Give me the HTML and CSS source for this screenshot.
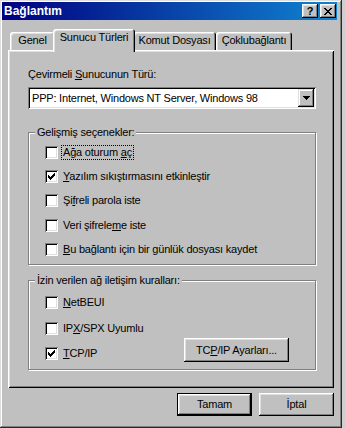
FILE: index.html
```html
<!DOCTYPE html>
<html lang="tr">
<head>
<meta charset="utf-8">
<title>Bağlantım</title>
<link rel="stylesheet" href="styles.css">
</head>
<body>
<div class="window">
  <div class="titlebar">
    <span class="title">Bağlantım</span>
    <div class="title-buttons">
      <span class="tbtn help">?</span>
      <span class="tbtn close"><svg width="8" height="7" viewBox="0 0 8 7" shape-rendering="crispEdges"><path d="M0 0h2v1H0zM6 0h2v1H6zM1 1h2v1H1zM5 1h2v1H5zM2 2h4v1H2zM3 3h2v1H3zM2 4h4v1H2zM1 5h2v1H1zM5 5h2v1H5zM0 6h2v1H0zM6 6h2v1H6z" fill="#000"/></svg></span>
    </div>
  </div>
  <div class="dialog-body">
    <div class="tabs">
      <div class="tab tab-genel">Genel</div>
      <div class="tab tab-sunucu active">Sunucu Türleri</div>
      <div class="tab tab-komut">Komut Dosyası</div>
      <div class="tab tab-coklu">Çoklubağlantı</div>
    </div>
    <div class="panel">
      <div class="field-label">Çevirmeli <u>S</u>unucunun Türü:</div>
      <div class="combo">
        <span class="combo-text">PPP: Internet, Windows NT Server, Windows 98</span>
        <span class="combo-btn"><svg width="7" height="4" viewBox="0 0 7 4" shape-rendering="crispEdges"><path d="M0 0h7v1H0zM1 1h5v1H1zM2 2h3v1H2zM3 3h1v1H3z" fill="#000"/></svg></span>
      </div>

      <div class="group group-adv">
        <div class="legend">Gelişmiş seçenekler:</div>
        <div class="rows">
          <div class="row"><span class="cb"></span><span class="cb-label focus">Ağa oturum <u>a</u>ç</span></div>
          <div class="row"><span class="cb"><svg width="7" height="7" viewBox="0 0 7 7" shape-rendering="crispEdges"><path d="M6 0h1v1H6zM5 1h2v1H5zM0 2h1v1H0zM4 2h3v1H4zM0 3h2v1H0zM3 3h3v1H3zM0 4h5v1H0zM1 5h3v1H1zM2 6h1v1H2z" fill="#000"/></svg></span><span class="cb-label"><u>Y</u>azılım sıkıştırmasını etkinleştir</span></div>
          <div class="row"><span class="cb"></span><span class="cb-label">Şi<u>f</u>reli parola iste</span></div>
          <div class="row"><span class="cb"></span><span class="cb-label">Veri şifrele<u>m</u>e iste</span></div>
          <div class="row"><span class="cb"></span><span class="cb-label"><u>B</u>u bağlantı için bir günlük dosyası kaydet</span></div>
        </div>
      </div>

      <div class="group group-proto">
        <div class="legend">İzin verilen ağ iletişim kuralları:</div>
        <div class="rows">
          <div class="row row-proto"><span class="cb"></span><span class="cb-label"><u>N</u>etBEUI</span></div>
          <div class="row row-proto"><span class="cb"></span><span class="cb-label">IP<u>X</u>/SPX Uyumlu</span></div>
          <div class="row row-proto"><span class="cb"><svg width="7" height="7" viewBox="0 0 7 7" shape-rendering="crispEdges"><path d="M6 0h1v1H6zM5 1h2v1H5zM0 2h1v1H0zM4 2h3v1H4zM0 3h2v1H0zM3 3h3v1H3zM0 4h5v1H0zM1 5h3v1H1zM2 6h1v1H2z" fill="#000"/></svg></span><span class="cb-label"><u>T</u>CP/IP</span><span class="btn btn-tcp">TC<u>P</u>/IP Ayarları...</span></div>
        </div>
      </div>
    </div>
    <div class="footer">
      <span class="btn btn-default">Tamam</span>
      <span class="btn">İptal</span>
    </div>
  </div>
</div>
</body>
</html>
```

FILE: styles.css
```css
* { box-sizing: border-box; }
html, body { margin: 0; padding: 0; }
body {
  width: 345px;
  height: 428px;
  overflow: hidden;
  background: #cfcfcf;
  font-family: "Liberation Sans", Arial, sans-serif;
  font-size: 11px;
  letter-spacing: -0.2px;
  color: #000;
}
u { text-decoration: underline; text-underline-offset: 1px; }

.window {
  width: 342px;
  height: 428px;
  background: #c0c0c0;
  padding: 2px 5px 3px 2px;
  box-shadow: inset -1px -1px #1c2f2a, inset 1px 1px #dfdfdf, inset -2px -2px #808080, inset 2px 2px #fff;
  display: flex;
  flex-direction: column;
}

.titlebar {
  height: 18px;
  background: linear-gradient(90deg, #000080, #1084d0);
  display: flex;
  align-items: center;
  justify-content: space-between;
  padding: 0 1px 0 2px;
}
.title {
  color: #fff;
  font-weight: bold;
  font-size: 12px;
  letter-spacing: 0;
  line-height: 14px;
}
.title-buttons { display: flex; gap: 2px; }
.tbtn {
  width: 16px;
  height: 14px;
  background: #c0c0c0;
  box-shadow: inset -1px -1px #000, inset 1px 1px #fff, inset -2px -2px #808080, inset 2px 2px #dfdfdf;
  display: flex;
  align-items: center;
  justify-content: center;
  font-weight: bold;
  font-size: 11px;
  letter-spacing: 0;
  line-height: 12px;
}

.dialog-body {
  padding: 9px 3px 0 6px;
  display: flex;
  flex-direction: column;
}

.tabs {
  height: 21px;
  display: flex;
  align-items: flex-end;
  padding-left: 2px;
}
.tab {
  height: 18px;
  background: #c0c0c0;
  border-radius: 3px 3px 0 0;
  box-shadow: inset 1px 1px #fff, inset -1px 0 #000, inset -2px 0 #808080, inset 2px 2px #dfdfdf;
  text-align: center;
  line-height: 15px;
  padding-top: 1px;
  white-space: nowrap;
}
.tab-genel { width: 45px; }
.tab-sunucu { width: 78px; }
.tab-komut { width: 83px; }
.tab-coklu { width: 76px; }
.tab.active {
  position: relative;
  z-index: 1;
  height: 23px;
  width: 82px;
  margin: 0 -2px -2px;
  padding-top: 1px;
  box-shadow: inset 1px 1px #fff, inset -1px 0 #000, inset -2px 0 #808080, inset 2px 2px #dfdfdf, inset 0 -3px #c0c0c0;
}

.panel {
  height: 338px;
  background: #c0c0c0;
  box-shadow: inset 1px 1px #fff, inset -1px -1px #000, inset 2px 2px #dfdfdf, inset -2px -2px #808080;
  padding: 17px 18px 0 20px;
  display: flex;
  flex-direction: column;
}

.field-label {
  line-height: 15px;
  height: 15px;
  white-space: nowrap;
}

.combo {
  margin-top: 5px;
  height: 22px;
  background: #fff;
  box-shadow: inset 1px 1px #808080, inset -1px -1px #fff, inset 2px 2px #000, inset -2px -2px #dfdfdf;
  padding: 2px;
  display: flex;
  align-items: center;
}
.combo-text {
  flex: 1;
  padding-left: 2px;
  line-height: 15px;
  white-space: nowrap;
}
.combo-btn {
  width: 16px;
  height: 18px;
  background: #c0c0c0;
  box-shadow: inset -1px -1px #000, inset 1px 1px #dfdfdf, inset -2px -2px #808080, inset 2px 2px #fff;
  display: flex;
  align-items: center;
  justify-content: center;
}

.group {
  border: 1px solid #808080;
  box-shadow: inset 1px 1px #fff, 1px 1px #fff;
  padding: 0 0 2px 16px;
}
.group-adv { margin-top: 23px; }
.group-proto { margin-top: 15px; padding-bottom: 3px; }

.legend {
  display: table;
  margin: -7px 0 0 -10px;
  padding: 0 2px;
  background: #c0c0c0;
  line-height: 13px;
  white-space: nowrap;
}

.group-adv .rows { padding-top: 1px; }
.group-proto .rows { padding-top: 3px; }

.row {
  height: 24.4px;
  display: flex;
  align-items: center;
}
.row-proto { height: 25.5px; }

.cb {
  flex: none;
  width: 13px;
  height: 13px;
  background: #fff;
  box-shadow: inset 1px 1px #808080, inset -1px -1px #fff, inset 2px 2px #000, inset -2px -2px #dfdfdf;
  display: flex;
  align-items: center;
  justify-content: center;
}
.cb-label {
  margin-left: 3px;
  padding: 0 1px;
  border: 1px solid transparent;
  line-height: 13px;
  white-space: nowrap;
}
.cb-label.focus { border: 1px dotted #000; }

.btn {
  width: 75px;
  height: 23px;
  background: #c0c0c0;
  box-shadow: inset -1px -1px #000, inset 1px 1px #fff, inset -2px -2px #808080, inset 2px 2px #dfdfdf;
  display: flex;
  align-items: center;
  justify-content: center;
  line-height: 15px;
  white-space: nowrap;
}
.btn-tcp {
  width: 105px;
  height: 24px;
  margin: -7px 26px 0 auto;
}
.btn-default {
  box-shadow: inset 0 0 0 1px #000, inset -2px -2px #000, inset 2px 2px #fff, inset -3px -3px #808080, inset 3px 3px #dfdfdf;
}

.footer {
  display: flex;
  justify-content: flex-end;
  gap: 7px;
  padding-top: 5px;
}
```
